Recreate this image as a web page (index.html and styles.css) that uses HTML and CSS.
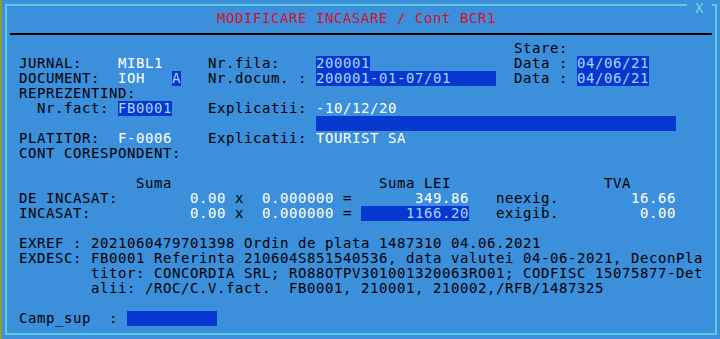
FILE: index.html
```html
<!DOCTYPE html>
<html lang="ro">
<head>
    <meta charset="UTF-8">
    <meta name="viewport" content="width=device-width, initial-scale=1.0">
    <title>Modificare incasare / Cont BCR1</title>
    <link rel="stylesheet" href="styles.css">
</head>
<body>
    <div class="screen">
        <span class="close">X</span>
        <div class="row title">                      MODIFICARE INCASARE / Cont BCR1</div>
        <div class="rule"></div>

        <div class="row">                                                       Stare:</div>
        <div class="row">JURNAL:    <span class="val">MIBL1</span>     Nr.fila:    <span class="fld">200001</span>                Data : <span class="fld">04/06/21</span></div>
        <div class="row">DOCUMENT:  <span class="val">IOH</span>   <span class="fld">A</span>   Nr.docum. : <span class="fld">200001-01-07/01     </span>  Data : <span class="fld">04/06/21</span></div>
        <div class="row">REPREZENTIND:</div>
        <div class="row">  Nr.fact: <span class="fld">FB0001</span>    Explicatii: <span class="val">-10/12/20</span></div>
        <div class="row">                                 <span class="fld">                                        </span></div>
        <div class="row">PLATITOR:  <span class="val">F-0006</span>    Explicatii: <span class="val">TOURIST SA</span></div>
        <div class="row">CONT CORESPONDENT:</div>
        <div class="row"></div>

        <div class="row">             Suma                       Suma LEI                 TVA</div>
        <div class="row">DE INCASAT:        <span class="val">0.00</span> x  <span class="val">0.000000</span> =       <span class="val">349.86</span>   neexig.        <span class="val">16.66</span></div>
        <div class="row">INCASAT:           <span class="val">0.00</span> x  <span class="val">0.000000</span> = <span class="fld">     1166.20</span>   exigib.         <span class="val">0.00</span></div>
        <div class="row"></div>

        <div class="row">EXREF : 2021060479701398 Ordin de plata 1487310 04.06.2021</div>
        <div class="row">EXDESC: FB0001 Referinta 210604S851540536, data valutei 04-06-2021, DeconPla</div>
        <div class="row">        titor: CONCORDIA SRL; RO88OTPV301001320063RO01; CODFISC 15075877-Det</div>
        <div class="row">        alii: /ROC/C.V.fact.  FB0001, 210001, 210002,/RFB/1487325</div>
        <div class="row"></div>

        <div class="row">Camp_sup  : <span class="fld">          </span></div>
    </div>
</body>
</html>
```

FILE: styles.css
```css
body {
    margin: 0;
    padding: 0 0 0 3px;
    height: 339px;
    overflow: hidden;
    border-left: 2px solid #8e9c3e;
    background: #3b8fdb;
    font-family: 'DejaVu Sans Mono', monospace;
    font-size: 14px;
    letter-spacing: 0.571px;
    color: #000;
}

.screen {
    position: relative;
    box-sizing: border-box;
    width: 712px;
    height: 331px;
    margin-top: 4px;
    padding: 5px 0 0 12px;
    border: 2px solid #5ccbdc;
}

/* close mark sits on the top border */
.close {
    position: absolute;
    top: -3px;
    left: 680px;
    padding: 0 8px;
    line-height: 11px;
    background: #3b8fdb;
    color: #6fd8e0;
}

.row {
    height: 15px;
    line-height: 15px;
    white-space: pre;
}

.title {
    color: #d0142c;
}

.rule {
    height: 2px;
    margin: 7px 3px 6px -9px;
    background: #000;
}

.val {
    color: #fff;
}

.fld {
    display: inline-block;
    height: 15px;
    vertical-align: top;
    background: #0638cf;
    color: #a6d6ff;
}
```
